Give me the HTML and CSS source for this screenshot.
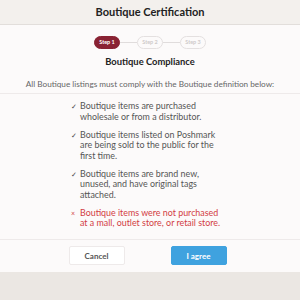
FILE: index.html
```html
<!DOCTYPE html>
<html lang="en">

<head>
    <meta charset="UTF-8">
    <meta name="viewport" content="width=device-width, initial-scale=1.0">
    <title>Boutique Certification</title>
    <link rel="stylesheet" href="styles.css">
</head>

<body>
    <div class="modal">
        <div class="modal-header">Boutique Certification</div>

        <div class="modal-body">
            <div class="steps">
                <span class="step active">Step 1</span>
                <span class="step-line"></span>
                <span class="step">Step 2</span>
                <span class="step-line"></span>
                <span class="step">Step 3</span>
            </div>

            <h2>Boutique Compliance</h2>
            <p class="intro">All Boutique listings must comply with the Boutique definition below:</p>

            <ul class="rules">
                <li><span class="mark">&#10003;</span>Boutique items are purchased wholesale or from a distributor.</li>
                <li><span class="mark">&#10003;</span>Boutique items listed on Poshmark are being sold to the public for the first time.</li>
                <li><span class="mark">&#10003;</span>Boutique items are brand new, unused, and have original tags attached.</li>
                <li class="bad"><span class="mark">&#215;</span>Boutique items were not purchased at a mall, outlet store, or retail store.</li>
            </ul>
        </div>

        <div class="modal-footer">
            <button class="btn-cancel">Cancel</button>
            <button class="btn-agree">I agree</button>
        </div>
    </div>
</body>

</html>
```

FILE: styles.css
```css
body {
    margin: 0;
    background: #ebe7e3;
    font-family: Lato, "Liberation Sans", sans-serif;
    color: #555;
}

.modal {
    background: #fcfafa;
}

.modal-header {
    height: 24px;
    line-height: 24px;
    background: #f3f0ed;
    border-bottom: 1px solid #e2dedb;
    text-align: center;
    font-size: 11px;
    font-weight: bold;
    color: #222;
}

.steps {
    display: flex;
    justify-content: center;
    align-items: center;
    padding-top: 11px;
}

.step {
    width: 24px;
    height: 11px;
    line-height: 11px;
    border: 1px solid #e4e0e0;
    border-radius: 7px;
    font-size: 5.5px;
    font-weight: bold;
    text-align: center;
    color: #cfcaca;
}

.step.active {
    background: #892233;
    border-color: #892233;
    color: #fff;
}

.step-line {
    width: 17px;
    height: 1px;
    background: #e0dcdc;
}

h2 {
    margin: 6px 0 0 0;
    text-align: center;
    font-size: 9.4px;
    line-height: 13px;
    color: #222;
}

.intro {
    margin: 11px 0 0 0;
    padding-bottom: 4px;
    border-bottom: 1px solid #eeeaea;
    text-align: center;
    font-size: 8.2px;
    line-height: 10px;
    color: #666;
}

.rules {
    list-style: none;
    margin: 7px 0 0 0;
    padding: 0 0 0 80px;
    width: 143px;
}

.rules li {
    position: relative;
    font-size: 8.9px;
    line-height: 10.5px;
    margin-bottom: 7.5px;
}

.rules li:last-child {
    margin-bottom: 0;
}

.rules .mark {
    position: absolute;
    left: -9px;
    font-size: 7px;
    color: #444;
}

.rules li.bad {
    color: #d23c44;
}

.rules li.bad .mark {
    color: #d23c44;
}

.modal-footer {
    margin-top: 10px;
    border-top: 1px solid #eeeaea;
    height: 32px;
    padding-right: 5px;
    display: flex;
    justify-content: center;
    align-items: center;
    gap: 46px;
}

button {
    width: 56px;
    height: 19px;
    padding: 0;
    font-family: Lato, "Liberation Sans", sans-serif;
    font-size: 8px;
    font-weight: bold;
    border-radius: 2px;
}

.btn-cancel {
    background: #fff;
    border: 1px solid #eeeaea;
    color: #555;
}

.btn-agree {
    background: #3fa2df;
    border: 1px solid #3fa2df;
    color: #fff;
}
```
